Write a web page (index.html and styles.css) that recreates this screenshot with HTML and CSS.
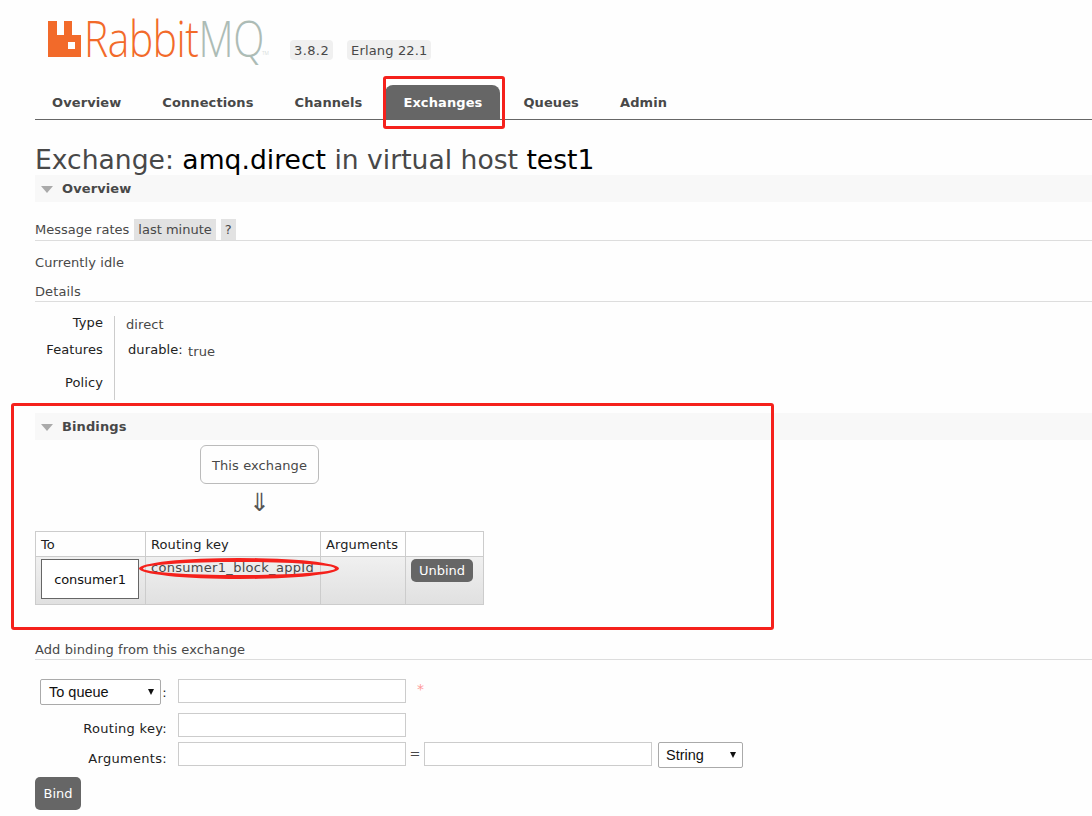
FILE: index.html
```html
<!DOCTYPE html>
<html lang="en">
<head>
    <meta charset="UTF-8">
    <title>RabbitMQ Management</title>
    <link rel="stylesheet" href="styles.css">
</head>
<body>
    <div class="page">
        <!-- Logo and versions -->
        <div class="header">
            <div class="logo">
                <svg class="logo-mark" width="33" height="36" viewBox="0 0 33 36">
                    <path fill="#f26a2a" fill-rule="evenodd" d="M0 0h9v14h7V0h8v14h9v22H0zM20 21v7h7v-7z"/>
                </svg>
                <span class="logo-text"><span class="logo-rabbit">Rabbit</span><span class="logo-mq">MQ</span></span>
                <span class="logo-tm">TM</span>
            </div>
            <span class="version">3.8.2</span>
            <span class="version version-erlang">Erlang 22.1</span>
        </div>

        <!-- Main tabs -->
        <ul class="tabs">
            <li><a>Overview</a></li>
            <li><a>Connections</a></li>
            <li><a>Channels</a></li>
            <li><a class="selected">Exchanges</a></li>
            <li><a>Queues</a></li>
            <li><a>Admin</a></li>
        </ul>

        <h1>Exchange: <b>amq.direct</b> in virtual host <b>test1</b></h1>

        <h2 class="section-head"><span class="arrow"></span>Overview</h2>
        <div class="rates">
            <span class="rates-label">Message rates</span>
            <span class="chip">last minute</span>
            <span class="chip">?</span>
        </div>
        <p class="idle">Currently idle</p>
        <h3 class="sub-head">Details</h3>
        <table class="facts">
            <tr class="row-type"><th>Type</th><td>direct</td></tr>
            <tr class="row-features"><th>Features</th><td><span class="feature">durable:</span> <span class="feature-value">true</span></td></tr>
            <tr class="row-policy"><th>Policy</th><td></td></tr>
        </table>

        <h2 class="section-head bindings-head"><span class="arrow"></span>Bindings</h2>
        <div class="this-exchange">This exchange</div>
        <div class="down-arrow">&#8659;</div>
        <table class="bindings">
            <tr class="bindings-top">
                <td class="col-to">To</td>
                <td class="col-key">Routing key</td>
                <td class="col-args">Arguments</td>
                <td class="col-action"></td>
            </tr>
            <tr class="bindings-row">
                <td class="cell-to"><span class="queue-box">consumer1</span></td>
                <td class="cell-key">consumer1_block_appId</td>
                <td></td>
                <td class="cell-action"><button class="btn btn-small">Unbind</button></td>
            </tr>
        </table>

        <h3 class="sub-head add-head">Add binding from this exchange</h3>
        <table class="form">
            <tr class="form-first">
                <th><span class="fake-select select-queue">To queue</span> <span class="colon">:</span></th>
                <td><span class="field"></span><span class="required">*</span></td>
            </tr>
            <tr class="form-key">
                <th>Routing key:</th>
                <td><span class="field"></span></td>
            </tr>
            <tr class="form-args">
                <th>Arguments:</th>
                <td>
                    <div class="args-line">
                        <span class="field"></span>
                        <span class="equals">=</span>
                        <span class="field"></span>
                        <span class="fake-select select-type">String</span>
                    </div>
                </td>
            </tr>
        </table>
        <button class="btn btn-bind">Bind</button>
    </div>

    <!-- Red annotations drawn over the screenshot -->
    <div class="mark mark-tab"></div>
    <div class="mark mark-bindings"></div>
    <div class="mark-oval"></div>
</body>
</html>
```

FILE: styles.css
```css
body {
    margin: 0;
    background-color: #fefefe;
    color: #484848;
    font-family: "DejaVu Sans", Verdana, sans-serif;
    font-size: 13px;
    letter-spacing: 0.1px;
    overflow: hidden;
}

.page {
    height: 816px;
    padding-left: 35px;
    overflow: hidden;
}

/* Header */
.header {
    display: flex;
    align-items: flex-start;
    height: 76px;
}

.logo {
    display: flex;
    align-items: flex-start;
    width: 242px;
    margin-left: 13px;
    padding-top: 21px;
    font-family: "Open Sans", "Liberation Sans", sans-serif;
    font-weight: 300;
    font-size: 49px;
    line-height: 36px;
    letter-spacing: -0.5px;
}

.logo-mark {
    flex-shrink: 0;
    margin-right: 3px;
}

.logo-text {
    width: 177px;
    margin-top: -1px;
    white-space: nowrap;
    transform: scaleX(0.83);
    transform-origin: left;
}

.logo-rabbit {
    color: #f26a2a;
}

.logo-mq {
    color: #adbcb6;
}

.logo-tm {
    color: #c4cdc9;
    font-size: 5px;
    line-height: 8px;
    margin-top: 28px;
    margin-left: 1px;
    letter-spacing: 0;
}

.version {
    margin-top: 40px;
    padding: 2px 4px;
    height: 16px;
    line-height: 17px;
    background-color: #f0f0f0;
    border-radius: 4px;
    letter-spacing: 0.4px;
}

.version-erlang {
    margin-left: 14px;
    letter-spacing: 0.15px;
}

/* Tabs */
.tabs {
    display: flex;
    list-style: none;
    margin: 0;
    padding: 0;
    height: 43px;
    border-bottom: 1px solid #666;
}

.tabs a {
    display: block;
    margin-top: 9px;
    margin-right: 7px;
    padding: 10px 17px 0;
    height: 34px;
    box-sizing: border-box;
    font-weight: bold;
    border-radius: 8px 8px 0 0;
    color: #484848;
}

.tabs a.selected {
    margin-left: -1px;
    margin-right: 6px;
    padding-left: 18px;
    padding-right: 18px;
    background-color: #666;
    color: #fff;
}

h1 {
    margin: 24px 0 0;
    font-size: 26.6px;
    line-height: 31px;
    font-weight: normal;
    letter-spacing: 0;
}

h1 b {
    font-weight: normal;
    color: #000;
}

.section-head {
    display: flex;
    align-items: center;
    height: 27px;
    margin: 0;
    background-color: #f8f8f8;
    font-size: 13px;
    font-weight: bold;
}

.arrow {
    width: 0;
    height: 0;
    margin: 2px 9px 0 6px;
    border-left: 6px solid transparent;
    border-right: 6px solid transparent;
    border-top: 7px solid #aaa;
}

.rates {
    display: flex;
    align-items: stretch;
    gap: 5px;
    height: 39px;
    padding-top: 17px;
    line-height: 21px;
    border-bottom: 1px solid #ddd;
    box-sizing: border-box;
}

.rates-label {
    letter-spacing: 0;
}

.chip {
    padding: 0 4px;
    background-color: #e2e2e2;
    letter-spacing: 0;
}

.idle {
    margin: 14px 0 0;
    line-height: 16px;
}

.sub-head {
    margin: 0;
    padding-top: 13px;
    height: 17px;
    line-height: 16px;
    font-size: 13px;
    font-weight: normal;
    border-bottom: 1px solid #ddd;
}

/* Details table */
.facts {
    border-collapse: collapse;
    margin-top: 14px;
    line-height: 13px;
}

.facts th {
    width: 68px;
    padding: 0 11px 0 0;
    text-align: right;
    vertical-align: top;
    font-weight: normal;
    color: #222;
}

.facts td {
    padding: 0 0 0 11px;
    vertical-align: top;
    border-left: 1px solid #ccc;
}

.row-type {
    height: 27px;
}

.row-type td {
    padding-top: 2px;
}

.row-features {
    height: 33px;
}

.row-policy {
    height: 24px;
}

.feature {
    color: #222;
    margin-left: 2px;
}

.feature-value {
    position: relative;
    top: 2px;
    margin-left: 1px;
}

.bindings-head {
    margin-top: 13px;
}

/* Bindings */
.this-exchange {
    width: 117px;
    height: 37px;
    margin: 5px 0 0 165px;
    line-height: 39px;
    text-align: center;
    border: 1px solid #bbb;
    border-radius: 6px;
}

.down-arrow {
    width: 119px;
    margin-left: 165px;
    height: 47px;
    line-height: 33px;
    font-family: "Noto Sans CJK SC", "DejaVu Sans", sans-serif;
    font-size: 25px;
    text-align: center;
    color: #555;
}

.bindings {
    border-collapse: collapse;
    width: 449px;
    table-layout: fixed;
}

.bindings td {
    border: 1px solid #ccc;
    padding: 0 5px;
    vertical-align: top;
}

.bindings-top td {
    height: 23px;
    padding-top: 1px;
    line-height: 23px;
    color: #222;
}

.col-to { width: 99px; }
.col-key { width: 164px; }
.col-args { width: 74px; }
.col-action { width: 67px; }

.bindings-row {
    background: linear-gradient(to bottom, #f0f0f0, #e0e0e0);
}

.bindings-row td {
    height: 44px;
    padding-top: 3px;
    line-height: 16px;
    padding-bottom: 0;
}

.bindings .cell-key {
    letter-spacing: 0.3px;
}

.bindings .cell-to {
    padding: 2px 5px 0;
}

.queue-box {
    display: block;
    width: 96px;
    height: 38px;
    line-height: 40px;
    text-align: center;
    background-color: #fff;
    border: 1px solid #666;
    color: #111;
    letter-spacing: -0.1px;
}

.bindings .cell-action {
    padding-top: 2px;
}

.btn {
    border: 0;
    background-color: #666;
    color: #fff;
    font-family: inherit;
    font-size: 13px;
    padding: 0;
}

.btn-small {
    width: 62px;
    height: 23px;
    border-radius: 5px;
}

/* Add binding form */
.add-head {
    margin-top: 27px;
    padding-top: 10px;
}

.form {
    border-collapse: collapse;
    margin-top: 19px;
}

.form th {
    width: 132px;
    padding: 0 11px 0 0;
    text-align: right;
    font-weight: normal;
    color: #222;
    white-space: nowrap;
    letter-spacing: 0.3px;
}

.form td {
    padding: 0;
}

.form-first th {
    display: flex;
    align-items: center;
    justify-content: space-between;
    padding-left: 5px;
    width: 127px;
    height: 26px;
}

.form-first td {
    vertical-align: top;
}

.form-key td {
    padding-top: 8px;
}

.form-key th {
    padding-top: 14px;
}

.form-args td {
    padding-top: 5px;
}

.form-args th {
    padding-top: 11px;
}

.field {
    display: inline-block;
    box-sizing: border-box;
    width: 228px;
    height: 24px;
    vertical-align: top;
    background-color: #fff;
    border: 1px solid #ccc;
}

.required {
    margin-left: 11px;
    color: #f99;
    font-size: 14px;
    line-height: 20px;
    vertical-align: top;
}

.args-line {
    display: flex;
    align-items: flex-start;
}

.equals {
    width: 18px;
    line-height: 24px;
    text-align: center;
}

.fake-select {
    display: block;
    box-sizing: border-box;
    position: relative;
    height: 26px;
    padding-left: 8px;
    font-family: "Liberation Sans", Arial, sans-serif;
    font-size: 14.5px;
    line-height: 25px;
    letter-spacing: 0;
    text-align: left;
    color: #111;
    background-color: #fff;
    border: 1px solid #aaa;
    border-radius: 2px;
}

.fake-select::after {
    content: "";
    position: absolute;
    right: 6px;
    top: 9px;
    border-left: 3.5px solid transparent;
    border-right: 3.5px solid transparent;
    border-top: 6px solid #111;
}

.select-queue {
    width: 121px;
}

.select-type {
    width: 85px;
    margin-left: 6px;
    padding-left: 7px;
}

.colon {
    margin-left: 1px;
}

.btn-bind {
    display: block;
    width: 46px;
    height: 33px;
    margin-top: 9px;
    border-radius: 5px;
}

/* Annotations */
.mark {
    position: absolute;
    border: 3px solid #f5211c;
    border-radius: 3px;
    box-sizing: border-box;
}

.mark-tab {
    left: 383px;
    top: 76px;
    width: 122px;
    height: 53px;
}

.mark-bindings {
    left: 11px;
    top: 403px;
    width: 763px;
    height: 227px;
}

.mark-oval {
    position: absolute;
    left: 139px;
    top: 558px;
    width: 200px;
    height: 21px;
    box-sizing: border-box;
    border: 4px solid #f5211c;
    border-radius: 50%;
}
```
